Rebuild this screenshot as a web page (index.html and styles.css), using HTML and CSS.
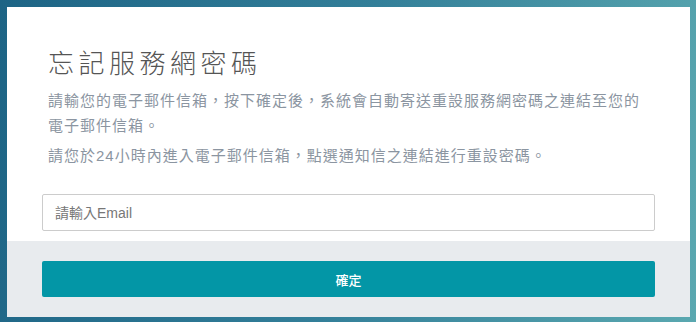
FILE: index.html
```html
<!DOCTYPE html>
<html>
<head>
<meta name="viewport" content="width=device-width, initial-scale=1.0"/>
<link rel="stylesheet" href="styles.css">
</head>
<body>
<div class="card">
    <div class="card-body">
        <h1 class="title">忘記服務網密碼</h1>
        <p class="desc">請輸您的電子郵件信箱，按下確定後，系統會自動寄送重設服務網密碼之連結至您的電子郵件信箱。</p>
        <p class="desc">請您於24小時內進入電子郵件信箱，點選通知信之連結進行重設密碼。</p>
        <input class="email" type="text" placeholder="請輸入Email">
    </div>
    <div class="card-foot">
        <button class="btn" type="button">確定</button>
    </div>
</div>
</body>
</html>
```

FILE: styles.css
```css
html, body {
    margin: 0;
    height: 100%;
}

body {
    background: linear-gradient(100deg, #1d6485 0%, #337f99 50%, #5aa8b0 100%);
    padding: 7px 6px 6px 7px;
    box-sizing: border-box;
    font-family: "Liberation Sans", "Noto Sans CJK TC", sans-serif;
}

.card {
    background: #fff;
    height: 309px;
    display: flex;
    flex-direction: column;
}

.card-body {
    padding: 39px 35px 10px 35px;
}

.title {
    margin: 0 0 10px 6px;
    font-size: 26px;
    font-weight: 300;
    letter-spacing: 4.5px;
    line-height: 32px;
    color: #555;
    font-family: "Noto Sans CJK TC", sans-serif;
}

.desc {
    margin: 0 0 5px 6px;
    font-size: 15px;
    line-height: 25px;
    letter-spacing: 1px;
    color: #8b95a1;
    font-family: "Liberation Sans", "Noto Sans CJK TC", sans-serif;
}

.email {
    display: block;
    width: 100%;
    box-sizing: border-box;
    height: 37px;
    margin-top: 26px;
    border: 1px solid #ccc;
    border-radius: 2px;
    padding: 0 12px;
    font-size: 14px;
    font-family: "Liberation Sans", "Noto Sans CJK TC", sans-serif;
    color: #555;
}

.email::placeholder {
    color: #777;
}

.card-foot {
    flex: 1;
    background: #e8ebee;
    padding: 20px 35px;
}

.btn {
    display: block;
    width: 100%;
    height: 36px;
    border: none;
    border-radius: 2px;
    background: #0396a6;
    color: #fff;
    font-size: 13px;
    font-weight: 500;
    font-family: "Noto Sans CJK TC", sans-serif;
}
```
